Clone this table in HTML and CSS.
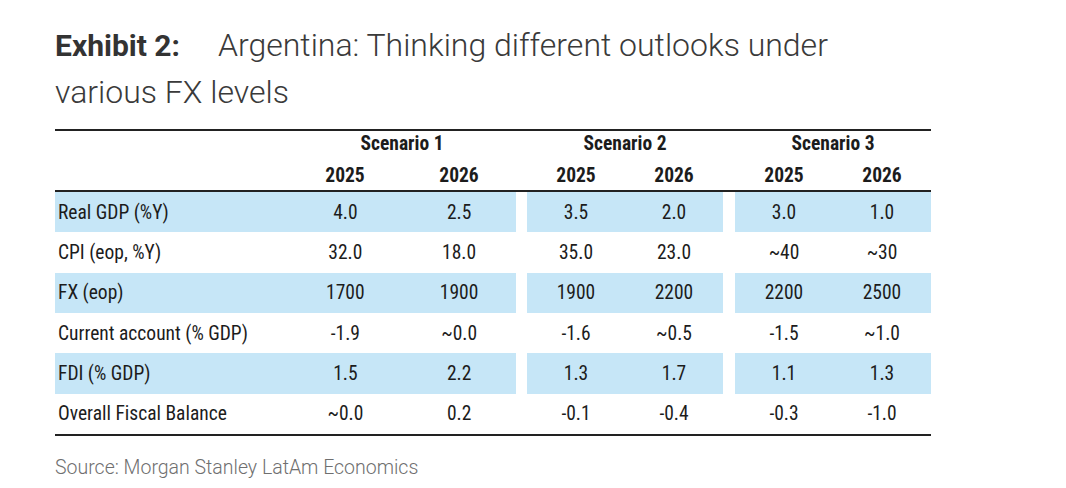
FILE: index.html
```html
<!DOCTYPE html>
<html>
<head>
<meta charset="utf-8">
<link rel="stylesheet" href="styles.css">
</head>
<body>
<div class="page">
  <h1 class="title"><span class="exhibit">Exhibit 2:</span>Argentina: Thinking different outlooks under<br>various FX levels</h1>
  <div class="table">
    <div class="head">
      <div class="row h1">
        <div class="g g1"><span class="lbl"></span><span class="span2">Scenario 1</span></div>
        <div class="g g2"><span class="span2">Scenario 2</span></div>
        <div class="g g3"><span class="span2">Scenario 3</span></div>
      </div>
      <div class="row h2">
        <div class="g g1"><span class="lbl"></span><span class="v">2025</span><span class="v">2026</span></div>
        <div class="g g2"><span class="v">2025</span><span class="v">2026</span></div>
        <div class="g g3"><span class="v">2025</span><span class="v">2026</span></div>
      </div>
    </div>
    <div class="body">
      <div class="row data blue">
        <div class="g g1"><span class="lbl">Real GDP (%Y)</span><span class="v">4.0</span><span class="v">2.5</span></div>
        <div class="g g2"><span class="v">3.5</span><span class="v">2.0</span></div>
        <div class="g g3"><span class="v">3.0</span><span class="v">1.0</span></div>
      </div>
      <div class="row data">
        <div class="g g1"><span class="lbl">CPI (eop, %Y)</span><span class="v">32.0</span><span class="v">18.0</span></div>
        <div class="g g2"><span class="v">35.0</span><span class="v">23.0</span></div>
        <div class="g g3"><span class="v">~40</span><span class="v">~30</span></div>
      </div>
      <div class="row data blue">
        <div class="g g1"><span class="lbl">FX (eop)</span><span class="v">1700</span><span class="v">1900</span></div>
        <div class="g g2"><span class="v">1900</span><span class="v">2200</span></div>
        <div class="g g3"><span class="v">2200</span><span class="v">2500</span></div>
      </div>
      <div class="row data">
        <div class="g g1"><span class="lbl">Current account (% GDP)</span><span class="v">-1.9</span><span class="v">~0.0</span></div>
        <div class="g g2"><span class="v">-1.6</span><span class="v">~0.5</span></div>
        <div class="g g3"><span class="v">-1.5</span><span class="v">~1.0</span></div>
      </div>
      <div class="row data blue">
        <div class="g g1"><span class="lbl">FDI (% GDP)</span><span class="v">1.5</span><span class="v">2.2</span></div>
        <div class="g g2"><span class="v">1.3</span><span class="v">1.7</span></div>
        <div class="g g3"><span class="v">1.1</span><span class="v">1.3</span></div>
      </div>
      <div class="row data">
        <div class="g g1"><span class="lbl">Overall Fiscal Balance</span><span class="v">~0.0</span><span class="v">0.2</span></div>
        <div class="g g2"><span class="v">-0.1</span><span class="v">-0.4</span></div>
        <div class="g g3"><span class="v">-0.3</span><span class="v">-1.0</span></div>
      </div>
    </div>
  </div>
  <p class="source">Source: Morgan Stanley LatAm Economics</p>
</div>
</body>
</html>
```

FILE: styles.css
```css
html, body {
  margin: 0;
  padding: 0;
  background: #ffffff;
}

.page {
  padding: 22px 0 0 55px;
  font-family: Roboto, "Liberation Sans", sans-serif;
}

.title {
  margin: 0;
  font-size: 32px;
  line-height: 47px;
  font-weight: 300;
  color: #3a3a3a;
}

.exhibit {
  font-size: 30px;
  font-weight: 700;
  color: #333333;
  margin-right: 38px;
}

.table {
  width: 876px;
  margin-top: 13px;
  border-top: 2px solid #222222;
  border-bottom: 2px solid #222222;
  font-size: 19.5px;
  font-stretch: 87.5%;
  color: #1c1c1c;
}

.head {
  border-bottom: 2px solid #222222;
  font-weight: 700;
}

.row {
  display: flex;
  gap: 11px;
}

.row .g3 {
  margin-left: 1px;
}

.g {
  display: flex;
  align-items: center;
}

.g1 { width: 461px; }
.g2, .g3 { width: 196px; }

.lbl {
  width: 231px;
  padding-left: 2px;
}

.g1 .v { width: 114px; }
.g2 .v, .g3 .v { width: 98px; }

.v {
  text-align: center;
}

.span2 {
  flex: 1;
  text-align: center;
}

.h1 { height: 24px; }
.h2 {
  height: 35px;
  padding-top: 5px;
  box-sizing: border-box;
}

.data {
  height: 40.33px;
}

.data .g1 { padding-left: 1px; width: 460px; }

.blue .g {
  background: #c6e6f7;
}

.source {
  margin: 20px 0 0;
  font-size: 19.5px;
  line-height: 24px;
  font-weight: 300;
  color: #6f6f6f;
}
```
